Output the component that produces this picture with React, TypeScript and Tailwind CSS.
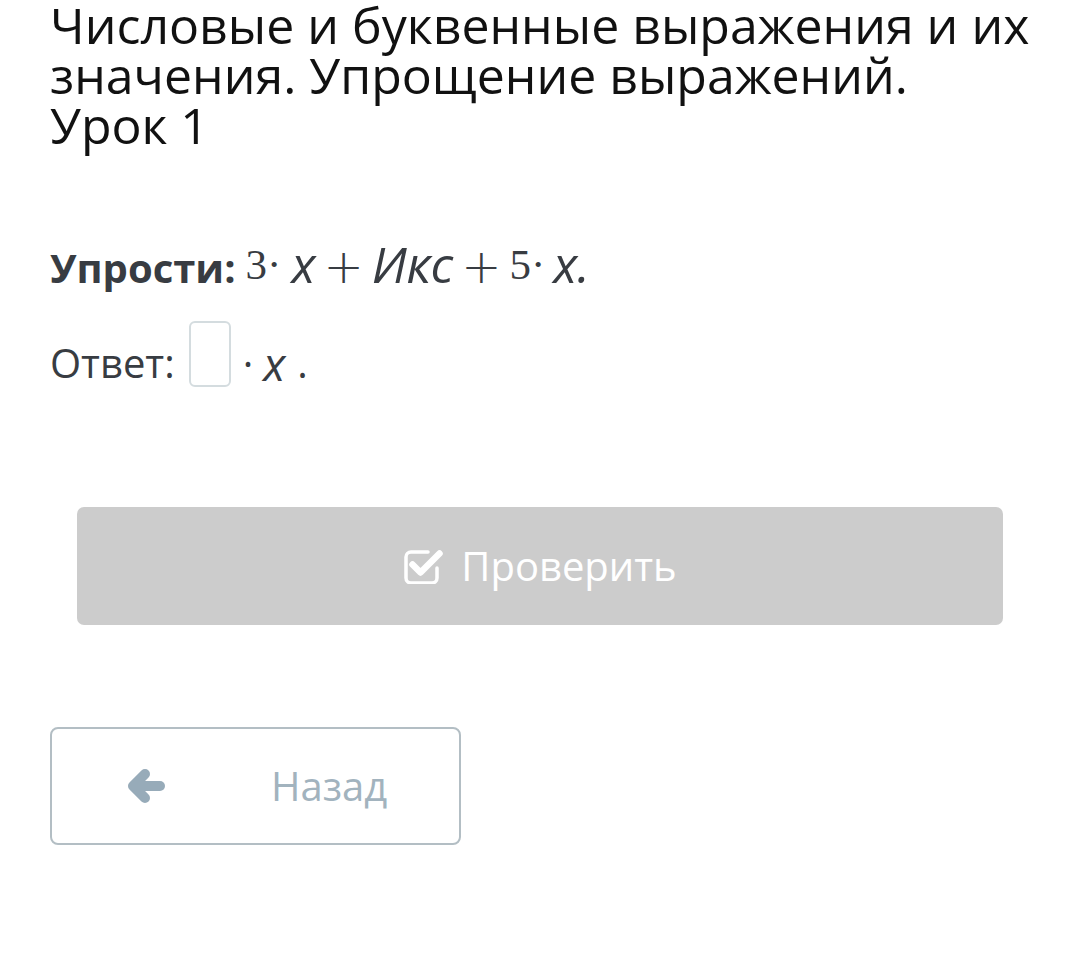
const sans = "font-['Open_Sans',sans-serif]";
const digit = "font-['Liberation_Serif',serif] not-italic text-[43px] relative -top-[4px]";
const plus = "font-['DejaVu_Sans',sans-serif] font-extralight not-italic text-[48px] mx-[8px]";

function CheckSquareIcon() {
  return (
    <svg viewBox="0 0 40 36" className="h-[36px] w-[40px]" fill="none" stroke="white" strokeLinecap="round" strokeLinejoin="round">
      <path d="M25 4H8a5 5 0 0 0-5 5v21a5 5 0 0 0 5 5h21a5 5 0 0 0 5-5V20" strokeWidth="3.5" />
      <path d="M9.5 16.5l8 8L36.5 5.5" strokeWidth="6.5" />
    </svg>
  );
}

function ArrowLeftIcon() {
  return (
    <svg viewBox="0 0 38 36" className="h-[36px] w-[38px]" fill="none" stroke="#97abb9" strokeLinecap="round" strokeLinejoin="round">
      <path d="M18 6L6 18l12 12" strokeWidth="10" />
      <path d="M8 18h25" strokeWidth="10" />
    </svg>
  );
}

export default function App() {
  return (
    <div className={`min-h-[961px] w-[1080px] bg-white pl-[50px] pr-[46px] ${sans}`}>
      <h1 className="w-[982px] text-[50px] leading-[50px] font-normal text-[#111]">
        Числовые и буквенные выражения и их значения. Упрощение выражений. Урок 1
      </h1>

      <div className="mt-[90px] flex items-baseline text-[40px] leading-[48px] text-[#383c42]">
        <span className="font-bold">Упрости:</span>
        <span className="ml-[10px] flex items-baseline text-[50px] italic">
          <span className={digit}>3·</span>
          <span className="ml-[10px]">x</span>
          <span className={plus}>+</span>
          <span>Икс</span>
          <span className={plus}>+</span>
          <span className={digit}>5·</span>
          <span className="ml-[8px]">x.</span>
        </span>
      </div>

      <div className="mt-[28px] flex items-end text-[40px] leading-[48px] text-[#383c42]">
        <span>Ответ:</span>
        <div className="ml-[14px] h-[66px] w-[42px] rounded-[6px] border-2 border-[#d4dcdf] bg-white" />
        <span className="ml-[12px]">·</span>
        <span className="ml-[10px] text-[46px] italic">x</span>
        <span className="ml-[12px]">.</span>
      </div>

      <div className="mt-[120px] pl-[27px] pr-[31px]">
        <button className="flex h-[118px] w-full items-center justify-center gap-[18px] rounded-[7px] bg-[#cccccc] text-[40px] text-white">
          <CheckSquareIcon />
          <span>Проверить</span>
        </button>
      </div>

      <button className="mt-[102px] flex h-[118px] w-[411px] items-center rounded-[8px] border-2 border-[#b3bec4] pl-[75px] text-[40px] text-[#a2b3be]">
        <ArrowLeftIcon />
        <span className="ml-[106px]">Назад</span>
      </button>
    </div>
  );
}
